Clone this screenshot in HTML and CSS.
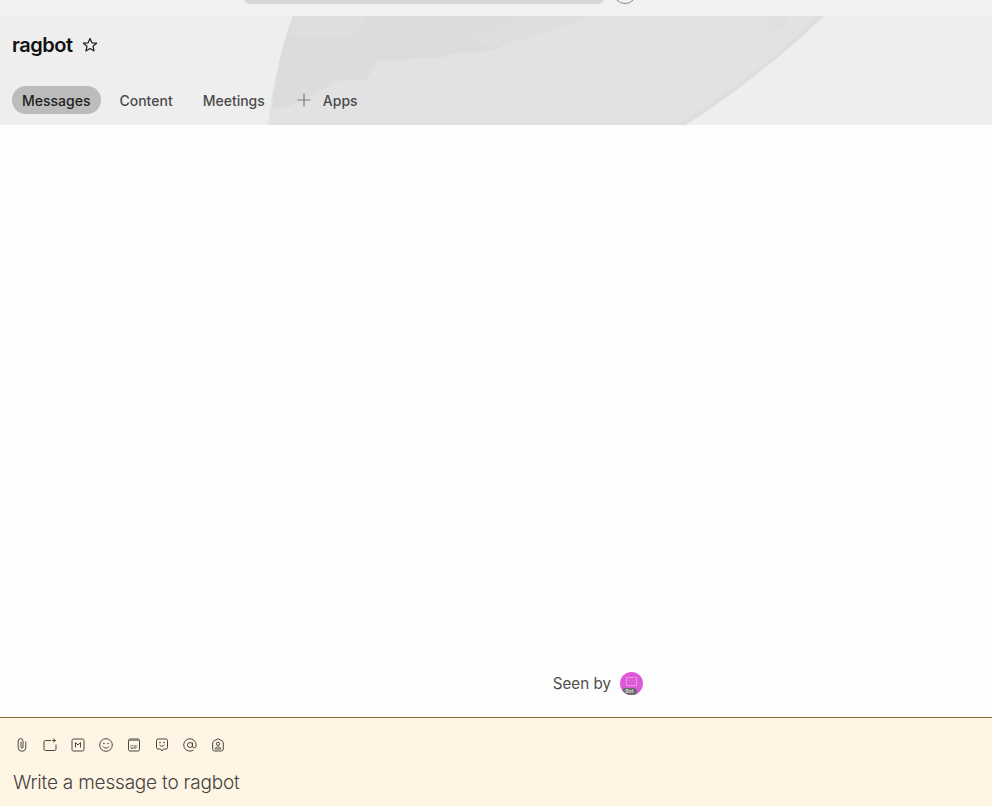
FILE: index.html
```html
<!DOCTYPE html>
<html lang="en">
<head>
<meta charset="utf-8">
<title>ragbot</title>
<link rel="stylesheet" href="styles.css">
</head>
<body>
<div class="app">
  <div class="topbar">
    <div class="search"></div>
    <div class="avatar-ring"></div>
  </div>
  <header class="banner">
    <svg class="banner-art" viewBox="0 0 992 109" aria-hidden="true">
      <defs>
        <pattern id="stipple" width="2" height="2" patternUnits="userSpaceOnUse">
          <rect width="1" height="1" fill="#e4e4e4"/>
        </pattern>
        <pattern id="stipple-dark" width="2" height="2" patternUnits="userSpaceOnUse">
          <rect width="1" height="1" fill="#dadada"/>
        </pattern>
      </defs>
      <path class="art-light" d="M293 0H824C790 33 735 78 685 109H268C272 70 281 32 293 0Z"/>
      <path class="art-dark" d="M293 0H588C570 9 540 19 507 27L497 33L483 36L455 37L440 42L416 42L400 45L378 44L372 54L366 64L352 63L333 66L322 74L309 81L290 90L272 93C276 58 283 26 293 0Z"/>
      <path class="art-band" d="M824 0C790 33 735 78 685 109H676C730 78 785 33 818 0Z"/>
      <path fill="url(#stipple)" d="M295 0H365L360 12L345 22L289 20Z"/>
      <path fill="url(#stipple)" d="M525 0H590L560 12L510 27L490 32L470 20Z"/>
      <path fill="url(#stipple-dark)" d="M765 0H790L780 12L770 18L768 8Z"/>
    </svg>
    <div class="title-row">
      <h1 class="title">ragbot</h1>
      <svg class="star" width="16" height="16" viewBox="0 0 16 16"><path d="M8 1.400l1.900 4.400 4.700.4-3.600 3.100 1.100 4.700L8 11.500l-4.100 2.500L5 9.300 1.400 6.200l4.700-.4z"/></svg>
    </div>
    <nav class="tabs">
      <a class="tab tab-active">Messages</a>
      <a class="tab tab-content">Content</a>
      <a class="tab">Meetings</a>
      <svg class="plus" width="14" height="14" viewBox="0 0 14 14"><path d="M7 .5v13M.5 7h13"/></svg>
      <a class="tab tab-apps">Apps</a>
    </nav>
  </header>
  <main class="messages">
    <div class="seen">
      <span class="seen-label">Seen by</span>
      <span class="bot">
        <svg class="bot-face" width="15" height="15" viewBox="0 0 15 15"><path d="M2.500 2.500h10v8h-10zM5.500 5.500v.8M9.500 5.500v.8"/></svg>
        <span class="bot-tag">Bot</span>
      </span>
    </div>
  </main>
  <footer class="composer">
    <div class="tools">
      <svg class="tool" viewBox="0 0 14 14"><path d="M10.800 3.500v6a3.800 3.800 0 0 1-7.600 0V3a2.400 2.400 0 0 1 4.800 0v6.200a1 1 0 0 1-2 0V3.800"/></svg>
      <svg class="tool" viewBox="0 0 14 14"><path d="M8 2.500H2.500A1.500 1.500 0 0 0 1 4v7a1.500 1.500 0 0 0 1.500 1.500h9A1.500 1.500 0 0 0 13 11V6.500M11 .5v4M9 2.500h4"/></svg>
      <svg class="tool" viewBox="0 0 14 14"><rect x="1" y="1" width="12" height="12" rx="1.500"/><path d="M4.500 9.500v-5L7 7l2.500-2.500v5"/></svg>
      <svg class="tool" viewBox="0 0 14 14"><circle cx="7" cy="7" r="6.300"/><circle class="tool-dot" cx="4.900" cy="5.500" r=".8"/><circle class="tool-dot" cx="9.100" cy="5.500" r=".8"/><path d="M4 8.500c1.500 2 4.500 2 6 0"/></svg>
      <svg class="tool" viewBox="0 0 14 14"><rect x="1.500" y="1" width="11" height="12" rx="1.500"/><path class="tool-top" d="M1.500 2h11"/><text class="gif" x="7" y="11">GIF</text></svg>
      <svg class="tool" viewBox="0 0 14 14"><path d="M3 1h8a1.500 1.500 0 0 1 1.500 1.500v7A1.500 1.500 0 0 1 11 11H8.500L7 13 5.500 11H3a1.500 1.500 0 0 1-1.500-1.500v-7A1.500 1.500 0 0 1 3 1zM4.500 7c1.200 1.500 3.800 1.500 5 0"/><circle class="tool-dot" cx="5" cy="4.600" r=".8"/><circle class="tool-dot" cx="9" cy="4.600" r=".8"/></svg>
      <svg class="tool" viewBox="0 0 14 14"><circle cx="7" cy="7" r="2.500"/><path d="M9.500 4.500V8a1.800 1.800 0 0 0 3.600 0V7a6.200 6.200 0 1 0-2.600 5"/></svg>
      <svg class="tool" viewBox="0 0 14 14"><path d="M7 .8l4 2c.8.400 1.300 1.100 1.300 2V11a2 2 0 0 1-2 2H3.700a2 2 0 0 1-2-2V4.800c0-.9.500-1.600 1.300-2z"/><circle cx="7" cy="5.800" r="1.600"/><path d="M4.200 11c.3-2.800 5.300-2.800 5.600 0z"/></svg>
    </div>
    <div class="placeholder">Write a message to ragbot</div>
  </footer>
</div>
</body>
</html>
```
FILE: styles.css
```css
* { box-sizing: border-box; }
html, body { margin: 0; height: 100%; }
body {
  font-family: Inter, "Liberation Sans", sans-serif;
  background: #fdfdfd;
  overflow: hidden;
}
.app { display: flex; flex-direction: column; height: 806px; }

.topbar {
  height: 16px;
  flex: none;
  display: flex;
  align-items: flex-end;
  gap: 8px;
  padding: 0 0 12px 243px;
  background: #f1f1f1;
  overflow: hidden;
}
.search {
  width: 362px;
  height: 30px;
  flex: none;
  border-radius: 8px;
  background: #d6d6d6;
}
.avatar-ring {
  width: 24px;
  height: 24px;
  flex: none;
  border: 1px solid #8c8c8c;
  border-radius: 50%;
}

.banner {
  position: relative;
  height: 109px;
  flex: none;
  padding: 0 12px;
  background: #eeeeee;
  overflow: hidden;
}
.banner-art { position: absolute; inset: 0; width: 992px; height: 109px; }
.art-light { fill: #e2e2e2; }
.art-dark { fill: #dcdcdc; }
.art-band { fill: #dedede; }

.title-row {
  position: relative;
  display: flex;
  align-items: center;
  gap: 10px;
  height: 58px;
}
.title {
  margin: 0;
  font-size: 20px;
  line-height: 24px;
  font-weight: 600;
  letter-spacing: -0.5px;
  color: #111;
}
.star { fill: none; stroke: #1f1f1f; stroke-width: 1.200; stroke-linejoin: round; }

.tabs {
  position: relative;
  display: flex;
  align-items: center;
  margin-top: 12px;
  height: 28px;
}
.tab {
  height: 28px;
  margin-right: 30px;
  font-size: 14px;
  line-height: 29px;
  font-weight: 500;
  color: #4a4a4a;
}
.tab-active {
  padding: 0 11px 0 10px;
  margin-right: 18px;
  border-radius: 14px;
  background: #bcbcbc;
  color: #1e1e1e;
}
.plus { margin-left: 2px; fill: none; stroke: #7b7b7b; stroke-width: 1.200; }
.tab-apps { margin: 0 0 0 12px; }

.messages {
  flex: 1;
  display: flex;
  justify-content: flex-end;
  align-items: flex-end;
  padding: 0 349px 20px 0;
}
.seen { display: flex; align-items: center; gap: 9px; }
.seen-label { font-size: 15.200px; line-height: 26px; padding-top: 1px; color: #4d4d4d; }
.bot {
  position: relative;
  width: 23px;
  height: 23px;
  display: flex;
  align-items: center;
  justify-content: center;
  border-radius: 50%;
  background: #dc5ad6;
  overflow: hidden;
}
.bot-face { fill: none; stroke: #eda5e9; stroke-width: 0.800; margin-bottom: 2px; }
.bot-tag {
  position: absolute;
  left: 2px;
  bottom: 0;
  width: 15px;
  height: 7px;
  text-align: center;
  font-size: 5px;
  line-height: 7px;
  font-weight: 600;
  color: #ddd;
  background: #6d6d6d;
  border-radius: 4px;
}

.composer {
  height: 89px;
  flex: none;
  padding: 20px 13px 0;
  background: #fff5e4;
  border-top: 1px solid #87663f;
}
.tools { display: flex; gap: 14px; padding-left: 2px; }
.tool {
  width: 14px;
  height: 14px;
  flex: none;
  fill: none;
  stroke: #4b4840;
  stroke-width: 1;
}
.tool-dot { fill: #4b4840; stroke: none; }
.tool-top { stroke: #8f8b83; stroke-width: 2; }
.gif {
  font-family: Inter, "Liberation Sans", sans-serif;
  font-size: 4.500px;
  font-weight: 700;
  fill: #6f6b62;
  stroke: none;
  text-anchor: middle;
}
.placeholder {
  margin-top: 19px;
  font-size: 19px;
  line-height: 24px;
  font-weight: 300;
  letter-spacing: -0.2px;
  color: #45433f;
}
```
